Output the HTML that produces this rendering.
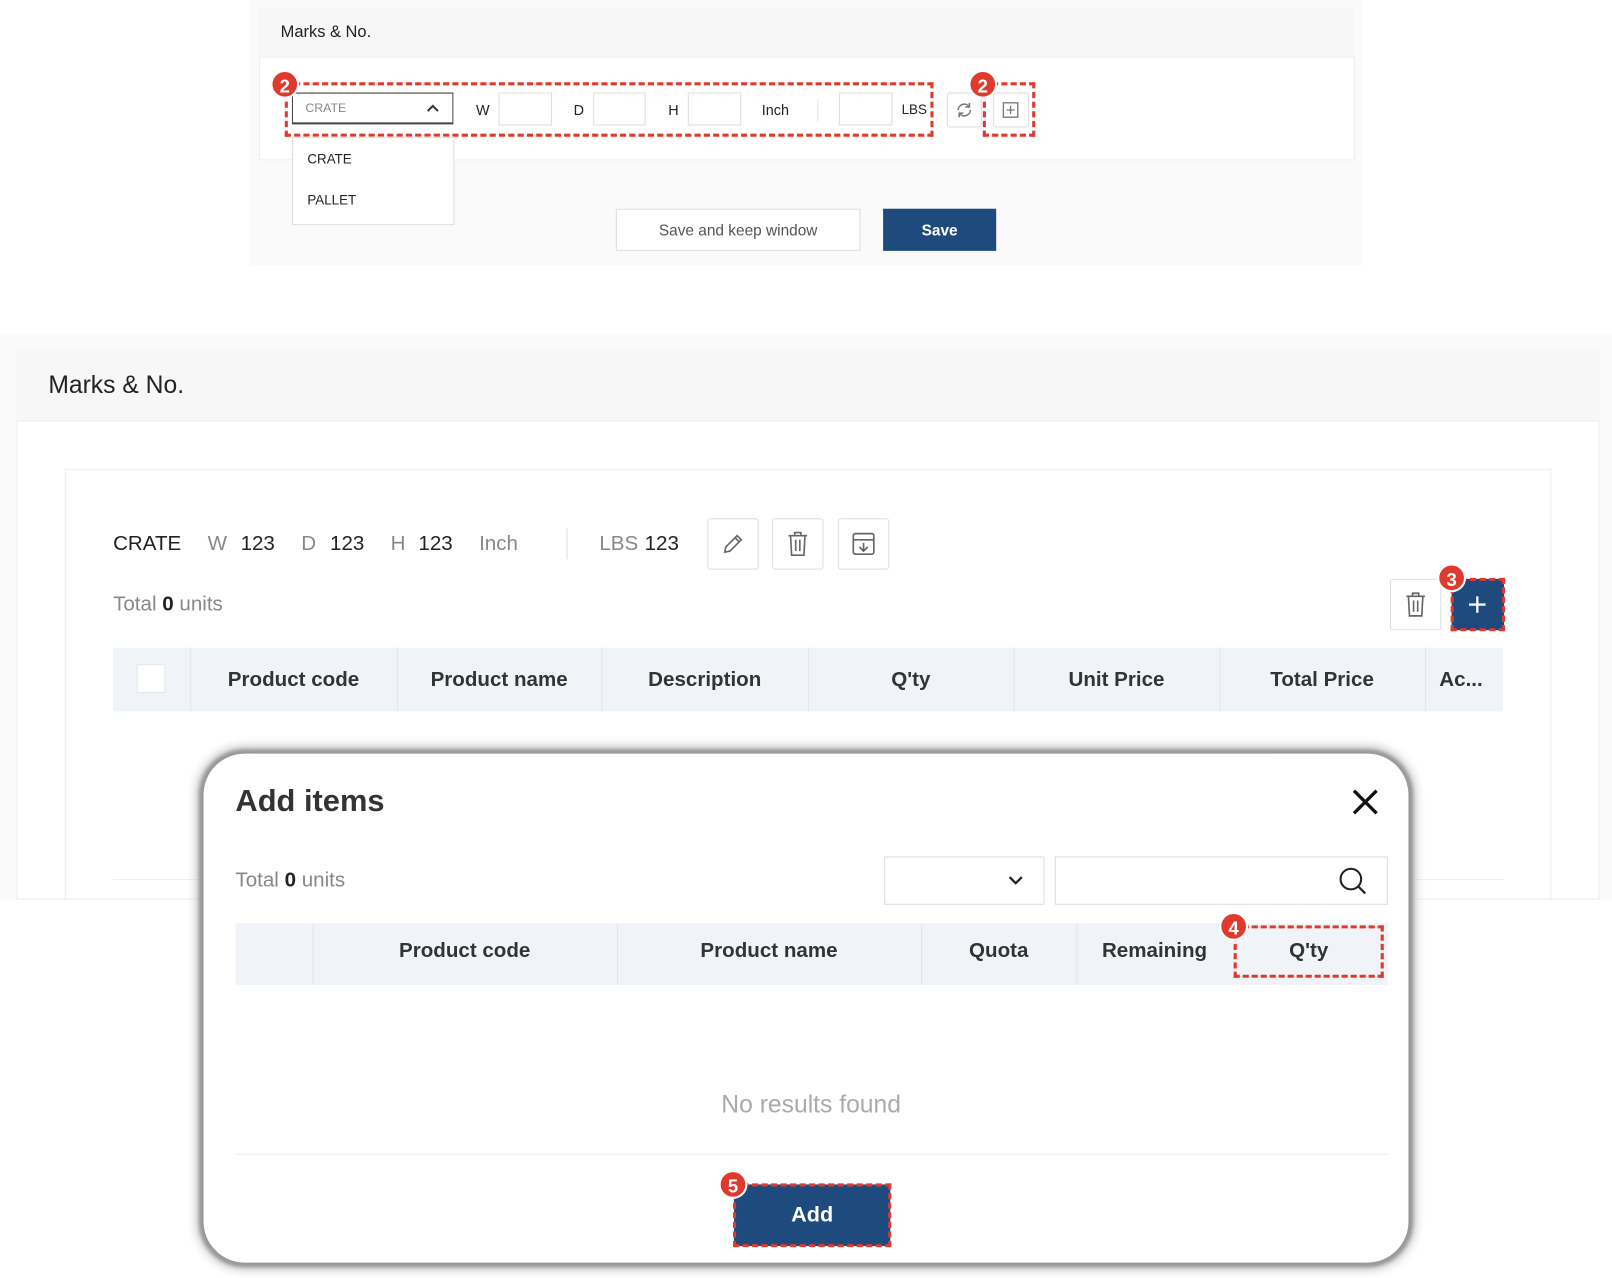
<!DOCTYPE html>
<html><head><meta charset="utf-8"><style>
*{box-sizing:border-box;margin:0;padding:0}
html,body{width:1612px;height:1278px;overflow:hidden;background:#fff;font-family:"Liberation Sans",sans-serif;color:#222}
#w{position:absolute;left:0;top:0;width:1568px;height:1243px;transform:scale(1.02806,1.02816);transform-origin:0 0}
.a{position:absolute}
.t{position:absolute;white-space:nowrap;line-height:1}
.inp{position:absolute;border:1px solid #ddd;background:#fff}
.dash{position:absolute;border:3px dashed #e03a2f}
.badge{position:absolute;width:28px;height:28px;border-radius:50%;background:#e03a2f;color:#fff;font-weight:bold;font-size:18px;text-align:center;line-height:28px;border:2px solid #fff;transform:translate(-50%,-50%)}
.btn{position:absolute;border:1px solid #ddd;background:#fff;border-radius:3px}
.th{position:absolute;font-size:20px;font-weight:bold;color:#333;text-align:center;line-height:1}
.sep{position:absolute;width:1px;background:#e2e6ea}
</style></head><body><div id="w">
<!-- top panel -->
<div class="a" style="left:242px;top:0;width:1083px;height:258px;background:#fafafa"></div>
<div class="a" style="left:252px;top:8px;width:1066px;height:148px;background:#fff;border:1px solid #eee"></div>
<div class="a" style="left:252px;top:8px;width:1066px;height:48px;background:#f7f7f7;border-bottom:1px solid #eee"></div>
<div class="t" style="left:273px;top:24px;font-size:16px">Marks &amp; No.</div>
<div class="a" style="left:284px;top:90px;width:157px;height:31px;border:1.5px solid #444;border-bottom-width:2px;background:#fff"></div>
<div class="t" style="left:297px;top:99px;font-size:12px;color:#888">CRATE</div>
<svg class="a" style="left:415px;top:100px" width="12" height="10"><path d="M1 8L6 3L11 8" stroke="#333" stroke-width="2" fill="none"/></svg>
<div class="t" style="left:463px;top:100px;font-size:14px">W</div>
<div class="inp" style="left:485px;top:90px;width:52px;height:32px"></div>
<div class="t" style="left:558px;top:100px;font-size:14px">D</div>
<div class="inp" style="left:577px;top:90px;width:51px;height:32px"></div>
<div class="t" style="left:650px;top:100px;font-size:14px">H</div>
<div class="inp" style="left:669px;top:90px;width:52px;height:32px"></div>
<div class="t" style="left:741px;top:100px;font-size:14px">Inch</div>
<div class="sep" style="left:795px;top:96px;height:22px"></div>
<div class="inp" style="left:816px;top:90px;width:52px;height:32px"></div>
<div class="t" style="left:877px;top:100px;font-size:13px">LBS</div>
<div class="btn" style="left:921px;top:90px;width:34px;height:34px"></div>
<svg class="a" style="left:929px;top:98px" width="18" height="18"><path d="M3 9a6 6 0 0 1 11-3M15 9a6 6 0 0 1-11 3" stroke="#777" stroke-width="1.5" fill="none"/><path d="M14 2v4h-4M4 16v-4h4" stroke="#777" stroke-width="1.5" fill="none"/></svg>
<div class="btn" style="left:966px;top:90px;width:35px;height:34px"></div>
<svg class="a" style="left:975px;top:99px" width="16" height="16"><rect x="1" y="1" width="14" height="14" fill="none" stroke="#777" stroke-width="1.3"/><path d="M8 4v8M4 8h8" stroke="#777" stroke-width="1.3"/></svg>
<div class="dash" style="left:277px;top:80px;width:631px;height:53px"></div>
<div class="dash" style="left:956px;top:80px;width:51px;height:53px"></div>
<div class="badge" style="left:277px;top:82px">2</div>
<div class="badge" style="left:956px;top:82px">2</div>
<div class="a" style="left:284px;top:133px;width:158px;height:86px;background:#fff;border:1px solid #ddd"></div>
<div class="t" style="left:299px;top:148px;font-size:13px">CRATE</div>
<div class="t" style="left:299px;top:188px;font-size:13px">PALLET</div>
<div class="a" style="left:599px;top:203px;width:238px;height:41px;background:#fff;border:1px solid #ddd"></div>
<div class="t" style="left:599px;top:217px;width:238px;text-align:center;font-size:15px;color:#555">Save and keep window</div>
<div class="a" style="left:859px;top:203px;width:110px;height:41px;background:#1e4a7e"></div>
<div class="t" style="left:859px;top:217px;width:110px;text-align:center;font-size:15px;color:#fff;font-weight:bold">Save</div>

<!-- section 2 -->
<div class="a" style="left:0;top:325px;width:1568px;height:550px;background:#fafafa"></div>
<div class="a" style="left:16px;top:341px;width:1540px;height:534px;background:#fff;border:1px solid #eee"></div>
<div class="a" style="left:16px;top:341px;width:1540px;height:69px;background:#f7f7f7;border-bottom:1px solid #eee"></div>
<div class="t" style="left:47px;top:363px;font-size:24px">Marks &amp; No.</div>
<div class="a" style="left:63px;top:456px;width:1446px;height:420px;border:1px solid #eee;border-bottom:none"></div>
<div class="t" style="left:110px;top:519px;font-size:20px">CRATE</div>
<div class="t" style="left:202px;top:519px;font-size:20px;color:#888">W</div>
<div class="t" style="left:234px;top:519px;font-size:20px">123</div>
<div class="t" style="left:293px;top:519px;font-size:20px;color:#888">D</div>
<div class="t" style="left:321px;top:519px;font-size:20px">123</div>
<div class="t" style="left:380px;top:519px;font-size:20px;color:#888">H</div>
<div class="t" style="left:407px;top:519px;font-size:20px">123</div>
<div class="t" style="left:466px;top:519px;font-size:20px;color:#888">Inch</div>
<div class="sep" style="left:551px;top:514px;height:30px;background:#ddd"></div>
<div class="t" style="left:583px;top:519px;font-size:20px;color:#888">LBS</div>
<div class="t" style="left:627px;top:519px;font-size:20px">123</div>
<div class="btn" style="left:688px;top:504px;width:50px;height:50px"></div>
<svg class="a" style="left:701px;top:517px" width="24" height="24"><path d="M4 20l1-5L16 4l4 4L9 19z M14 6l4 4" stroke="#666" stroke-width="1.6" fill="none"/></svg>
<div class="btn" style="left:751px;top:504px;width:50px;height:50px"></div>
<svg class="a" style="left:765px;top:516px" width="22" height="26"><path d="M2 5h18M8 5V2h6v3M4 5l1 19h12l1-19M9 9v11M13 9v11" stroke="#666" stroke-width="1.6" fill="none"/></svg>
<div class="btn" style="left:815px;top:504px;width:50px;height:50px"></div>
<svg class="a" style="left:828px;top:517px" width="24" height="24"><rect x="2" y="2" width="20" height="20" rx="2" fill="none" stroke="#666" stroke-width="1.6"/><path d="M2 8h20M12 11v8M8 15l4 4 4-4" stroke="#666" stroke-width="1.6" fill="none"/></svg>
<div class="t" style="left:110px;top:578px;font-size:20px;color:#888">Total <b style="color:#222">0</b> units</div>
<div class="btn" style="left:1352px;top:563px;width:50px;height:50px"></div>
<svg class="a" style="left:1366px;top:575px" width="22" height="26"><path d="M2 5h18M8 5V2h6v3M4 5l1 19h12l1-19M9 9v11M13 9v11" stroke="#666" stroke-width="1.6" fill="none"/></svg>
<div class="a" style="left:1412px;top:563px;width:51px;height:50px;background:#1e4a7e"></div>
<svg class="a" style="left:1427px;top:578px" width="20" height="20"><path d="M10 2v16M2 10h16" stroke="#fff" stroke-width="2.2"/></svg>
<div class="dash" style="left:1411px;top:562px;width:53px;height:52px"></div>
<div class="badge" style="left:1412px;top:562px">3</div>
<div class="a" style="left:110px;top:630px;width:1352px;height:62px;background:#f0f4f8"></div>
<div class="a" style="left:133px;top:646px;width:28px;height:28px;background:#fff;border:1px solid #e6e6e6"></div>
<div class="sep" style="left:185px;top:630px;height:62px"></div>
<div class="sep" style="left:386px;top:630px;height:62px"></div>
<div class="sep" style="left:585px;top:630px;height:62px"></div>
<div class="sep" style="left:786px;top:630px;height:62px"></div>
<div class="sep" style="left:986px;top:630px;height:62px"></div>
<div class="sep" style="left:1186px;top:630px;height:62px"></div>
<div class="sep" style="left:1386px;top:630px;height:62px"></div>
<div class="th" style="left:185px;top:651px;width:201px">Product code</div>
<div class="th" style="left:386px;top:651px;width:199px">Product name</div>
<div class="th" style="left:585px;top:651px;width:201px">Description</div>
<div class="th" style="left:786px;top:651px;width:200px">Q'ty</div>
<div class="th" style="left:986px;top:651px;width:200px">Unit Price</div>
<div class="th" style="left:1186px;top:651px;width:200px">Total Price</div>
<div class="th" style="left:1400px;top:651px;text-align:left">Ac...</div>
<div class="a" style="left:110px;top:855px;width:1352px;height:1px;background:#eee"></div>

<!-- modal -->
<div class="a" style="left:198px;top:733px;width:1172px;height:495px;background:#fff;border-radius:40px;box-shadow:0 0 3px 4px #999,0 0 10px 6px #bbb"></div>
<div class="t" style="left:229px;top:765px;font-size:30px;font-weight:bold;color:#333">Add items</div>
<svg class="a" style="left:1315px;top:767px" width="26" height="26"><path d="M2 2L24 24M24 2L2 24" stroke="#111" stroke-width="3.2"/></svg>
<div class="t" style="left:229px;top:846px;font-size:20px;color:#888">Total <b style="color:#222">0</b> units</div>
<div class="inp" style="left:860px;top:833px;width:156px;height:47px"></div>
<svg class="a" style="left:980px;top:851px" width="16" height="11"><path d="M2 2l6 6 6-6" stroke="#222" stroke-width="2.2" fill="none"/></svg>
<div class="inp" style="left:1026px;top:833px;width:324px;height:47px"></div>
<svg class="a" style="left:1302px;top:843px" width="28" height="28"><circle cx="12" cy="12" r="10" fill="none" stroke="#222" stroke-width="2"/><path d="M19 19l7 7" stroke="#222" stroke-width="2.2"/></svg>
<div class="a" style="left:229px;top:898px;width:1121px;height:60px;background:#f0f4f8"></div>
<div class="sep" style="left:304px;top:898px;height:60px"></div>
<div class="sep" style="left:600px;top:898px;height:60px"></div>
<div class="sep" style="left:896px;top:898px;height:60px"></div>
<div class="sep" style="left:1047px;top:898px;height:60px"></div>
<div class="th" style="left:304px;top:915px;width:296px">Product code</div>
<div class="th" style="left:600px;top:915px;width:296px">Product name</div>
<div class="th" style="left:896px;top:915px;width:151px">Quota</div>
<div class="th" style="left:1047px;top:915px;width:152px">Remaining</div>
<div class="th" style="left:1200px;top:915px;width:146px">Q'ty</div>
<div class="dash" style="left:1200px;top:900px;width:146px;height:51px"></div>
<div class="badge" style="left:1200px;top:901px">4</div>
<div class="t" style="left:600px;top:1063px;width:378px;text-align:center;font-size:24px;color:#aaa">No results found</div>
<div class="a" style="left:229px;top:1122px;width:1121px;height:1px;background:#eee"></div>
<div class="a" style="left:714px;top:1152px;width:152px;height:60px;background:#1e4a7e"></div>
<div class="t" style="left:714px;top:1171px;width:152px;text-align:center;font-size:21px;color:#fff;font-weight:bold">Add</div>
<div class="dash" style="left:713px;top:1151px;width:154px;height:62px"></div>
<div class="badge" style="left:713px;top:1152px">5</div>
</div></body></html>
